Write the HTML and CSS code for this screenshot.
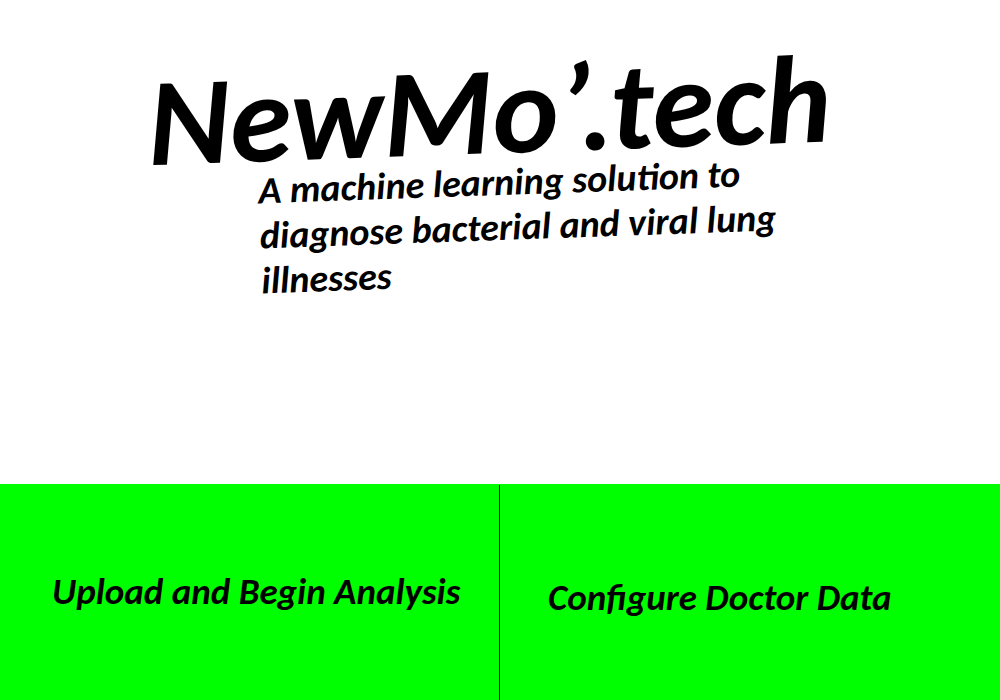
FILE: index.html
```html
<!DOCTYPE html>
<html lang="en">
<head>
<meta charset="utf-8">
<title>NewMo’.tech</title>
<link rel="stylesheet" href="styles.css">
</head>
<body>
<main class="page">
<header class="hero">
<div class="brand">
<h1 class="title">NewMo’.tech</h1>
<p class="tagline">A machine learning solution to diagnose bacterial and viral lung illnesses</p>
</div>
</header>
<nav class="actions">
<button class="action action-upload" type="button">Upload and Begin Analysis</button>
<button class="action action-configure" type="button">Configure Doctor Data</button>
</nav>
</main>
</body>
</html>
```

FILE: styles.css
```css
* { box-sizing: border-box; }
body {
  margin: 0;
  background: #fff;
  color: #000;
  font-family: Calibri, Carlito, Lato, sans-serif;
  font-weight: 700;
  font-style: italic;
}
.page {
  display: grid;
  grid-template-rows: 1fr 216px;
  min-height: 100vh;
}
.hero {
  display: flex;
  justify-content: center;
  align-items: flex-start;
  padding-top: 62px;
}
.brand {
  width: 700px;
  transform: rotate(-2deg);
}
.title {
  margin: 0;
  font-size: 125px;
  line-height: 98px;
  white-space: nowrap;
}
.tagline {
  margin: 0 0 0 108px;
  width: 530px;
  font-size: 38px;
  line-height: 45px;
}
.actions {
  display: grid;
  grid-template-columns: 1fr 1fr;
  padding-top: 1px;
  background: #0f0;
}
.action {
  border: 0;
  background: #0f0;
  color: #000;
  font: inherit;
  font-size: 37px;
  line-height: 44px;
  text-align: left;
}
.action-upload {
  border-right: 1px solid #000;
  padding: 0 0 2px 52px;
}
.action-configure {
  padding: 10px 0 0 48px;
}
```
